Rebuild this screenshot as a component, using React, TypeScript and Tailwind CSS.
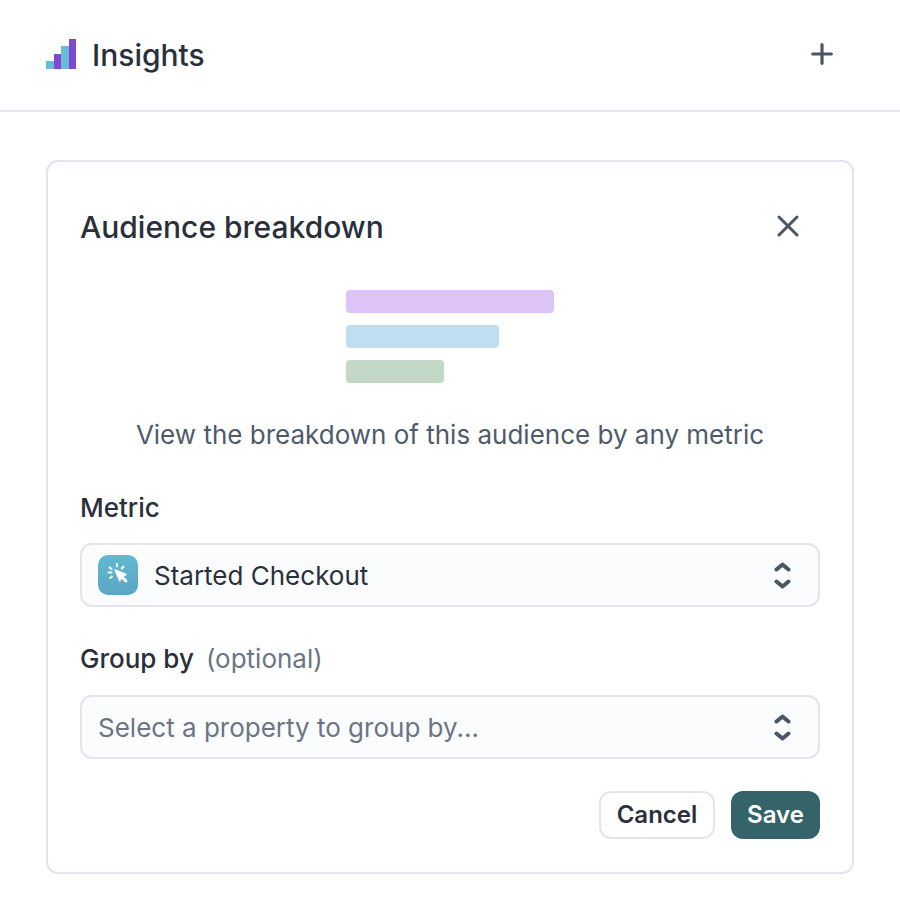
import { Plus, X } from 'lucide-react';

function UpDown() {
  return (
    <svg width="17" height="27" viewBox="0 0 17 27" fill="none" stroke="#4b5563" strokeWidth="4" strokeLinecap="round" strokeLinejoin="round">
      <path d="M2.500 7.500 8.500 2.500l6 5" />
      <path d="M2.500 19.500 8.500 24.500l6-5" />
    </svg>
  );
}

function Logo() {
  return (
    <svg width="30" height="30" viewBox="0 0 30 30">
      <rect x="0" y="22" width="8" height="8" fill="#67bcd8" />
      <rect x="8" y="15" width="7" height="15" fill="#8049cf" />
      <rect x="15" y="7" width="8" height="23" fill="#67bcd8" />
      <rect x="23" y="0" width="7" height="30" fill="#8049cf" />
    </svg>
  );
}

function ClickIcon() {
  return (
    <div className="h-10 w-10 shrink-0 rounded-[10px] bg-gradient-to-b from-[#62b9d3] to-[#5aa7c2]">
      <svg width="40" height="40" viewBox="0 0 40 40" fill="none" stroke="#ffffff" strokeWidth="2" strokeLinecap="round">
        <path d="M17 15 28 19.500l-4.200 2-2 4.500z" fill="#ffffff" strokeWidth="1.400" strokeLinejoin="round" />
        <path d="M23.500 21.500 28 26" strokeWidth="2.800" />
        <path d="M19 9v2.500" />
        <path d="M11.500 12.500l2 1.500" />
        <path d="M10.500 17.500h3" />
        <path d="M12 23l2-1.500" />
        <path d="M25.500 11.500l-1.800 2" />
      </svg>
    </div>
  );
}

export default function App() {
  return (
    <div className="h-[906px] w-[900px] bg-white font-['Inter',sans-serif] text-[#2a303b]">
      <header className="flex h-[112px] items-center justify-between border-b-2 border-[#e2e6ec] pb-[2px] pl-[46px] pr-[62px]">
        <div className="flex items-center gap-4">
          <Logo />
          <h1 className="mt-[2px] text-[30px] font-medium leading-none">Insights</h1>
        </div>
        <Plus size={32} color="#4b5563" strokeWidth={2.4} />
      </header>

      <main className="px-[46px] pt-[48px]">
        <section className="h-[714px] rounded-[12px] border-2 border-[#e2e6ec] px-[32px] pt-[49px]">
          <div className="flex h-[32px] items-center justify-between">
            <h2 className="text-[30px] font-medium leading-none">Audience breakdown</h2>
            <X size={36} color="#4b5563" strokeWidth={2} className="mb-[2px] mr-[14px]" />
          </div>

          <div className="mt-[47px] ml-[266px] flex flex-col gap-3">
            <div className="h-[23px] w-[208px] rounded-[4px] bg-[#dcc4f9]" />
            <div className="h-[23px] w-[153px] rounded-[4px] bg-[#bfdef0]" />
            <div className="h-[23px] w-[98px] rounded-[4px] bg-[#c3d9c6]" />
          </div>

          <p className="mt-[36px] text-center text-[26px] leading-[32px] text-[#4f5b6b]">
            View the breakdown of this audience by any metric
          </p>

          <label className="mt-[41px] block text-[26px] font-medium leading-[32px]">Metric</label>
          <div className="mt-[19px] flex h-[64px] items-center gap-4 rounded-[12px] border-2 border-[#e2e6ec] bg-[#fafcfe] pl-[16px] pr-[27px]">
            <ClickIcon />
            <span className="flex-1 text-[26px]">Started Checkout</span>
            <UpDown />
          </div>

          <div className="mt-[36px] flex items-baseline gap-[12px] text-[26px] leading-[32px]">
            <label className="font-medium">Group by</label>
            <span className="text-[#6b7585]">(optional)</span>
          </div>
          <div className="mt-[20px] flex h-[64px] items-center rounded-[12px] border-2 border-[#e2e6ec] bg-[#fafcfe] pl-[16px] pr-[27px]">
            <span className="flex-1 text-[26px] text-[#6b7585]">Select a property to group by...</span>
            <UpDown />
          </div>

          <div className="mt-[32px] flex justify-end gap-4">
            <button className="h-[48px] w-[116px] rounded-[12px] border-2 border-[#e2e6ec] bg-white text-[24px] font-semibold">Cancel</button>
            <button className="h-[48px] w-[89px] rounded-[12px] bg-[#34646a] text-[24px] font-semibold text-white">Save</button>
          </div>
        </section>
      </main>
    </div>
  );
}
